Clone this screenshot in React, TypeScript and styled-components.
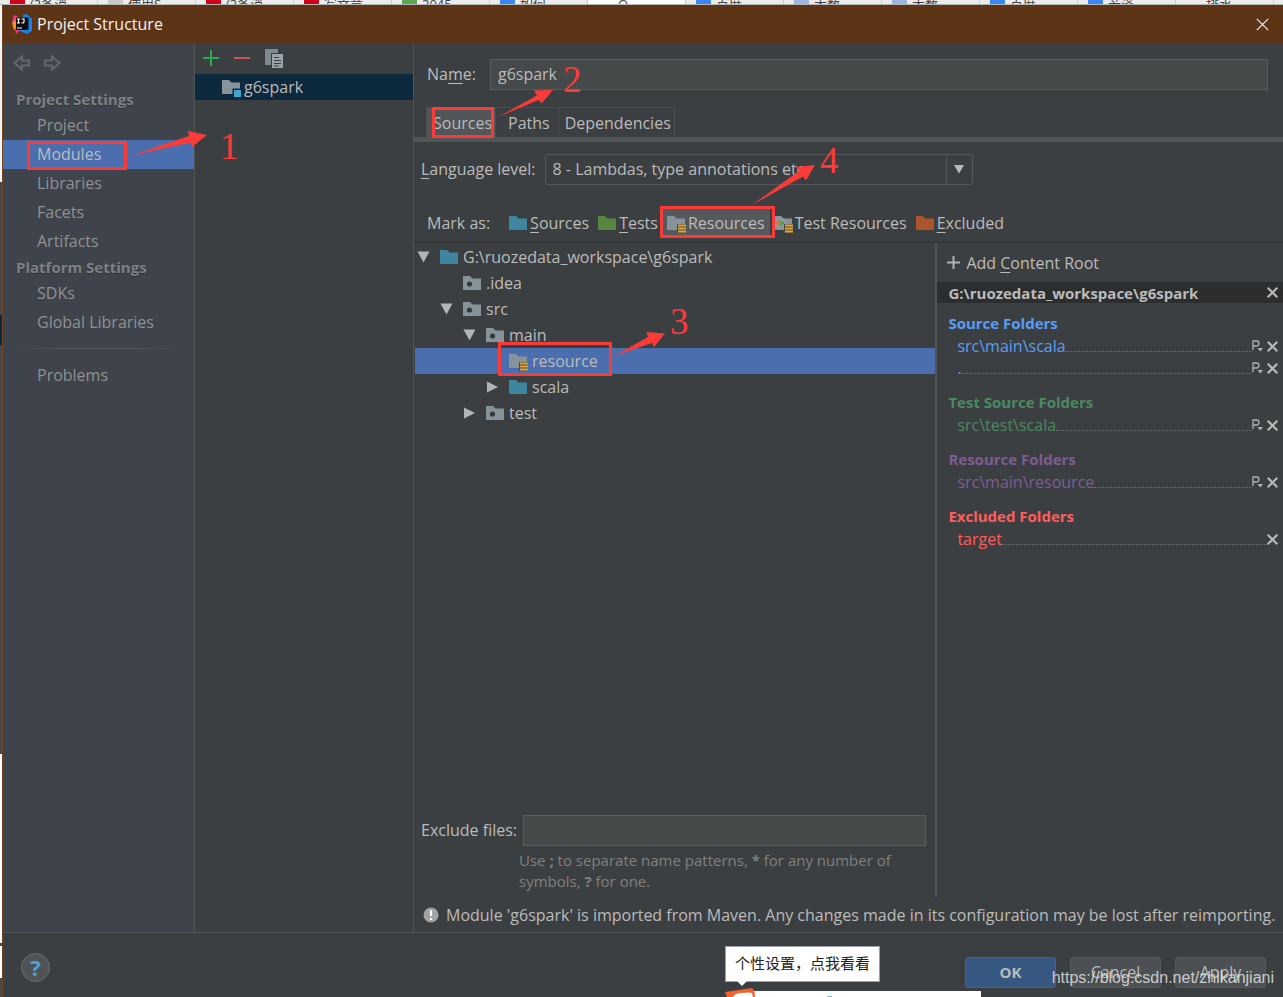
import React from "react";
import styled, { createGlobalStyle, css } from "styled-components";

const color = {
  panel: "#3c3f41",
  sidebar: "#3e434c",
  title: "#5e3416",
  frame: "#6f4526",
  line: "#515355",
  field: "#45494a",
  text: "#bbbbbb",
  muted: "#919191",
  hint: "#808080",
  selected: "#4b6eaf",
  mark: "#fb3b38",
};

const GlobalStyle = createGlobalStyle`
  *, *::before, *::after { box-sizing: border-box; }
  body {
    margin: 0;
    background: ${color.panel};
    color: ${color.text};
    font-family: "Open Sans", "Noto Sans CJK SC", sans-serif;
    font-size: 16px;
    line-height: 22px;
  }
  button, input, select { font: inherit; color: inherit; }
  button { background: none; border: 0; padding: 0; cursor: pointer; }
  a { color: inherit; text-decoration: none; }
  ul { list-style: none; margin: 0; padding: 0; }
  h2, h3, p { margin: 0; font-size: inherit; }
  u { text-underline-offset: 3px; }
  svg { display: block; flex: none; }
`;

/* ---------- desktop behind the dialog ---------- */

const Desktop = styled.div`
  position: relative;
  display: flex;
  flex-direction: column;
  min-height: 100vh;
  overflow: hidden;
`;

const BrowserTabs = styled.div`
  display: flex;
  height: 5px;
  overflow: hidden;
  background: #ececec;
  border-bottom: 1px solid #b4b4b4;
`;

const BrowserTab = styled.span<{ $active?: boolean }>`
  display: flex;
  flex: none;
  gap: 5px;
  width: 98px;
  height: 16px;
  margin-top: -4px;
  padding-left: 10px;
  border-right: 1px solid #c9c9c9;
  background: ${(p) => (p.$active ? "#ffffff" : "transparent")};
  color: #444;
  font-size: 13px;
  line-height: 16px;
  white-space: nowrap;
`;

const Favicon = styled.i<{ $tint: string }>`
  width: 15px;
  height: 15px;
  background: ${(p) => p.$tint};
`;

const Backdrop = styled.div`
  display: flex;
  flex: 1;
  padding-left: 2px;
  background: linear-gradient(
    #f4f4f4 177px,
    #45494a 177px 310px,
    #0d293e 310px 340px,
    #45494a 340px 749px,
    #ffffff 749px 938px,
    #45494a 938px 941px,
    #ffffff 941px 973px,
    #45494a 973px
  );
`;

/* ---------- dialog frame ---------- */

const Dialog = styled.main`
  display: flex;
  flex: 1;
  flex-direction: column;
  min-width: 0;
  border-left: 1px solid ${color.frame};
  background: ${color.panel};
`;

const TitleBar = styled.header`
  display: flex;
  align-items: center;
  gap: 5px;
  height: 38px;
  padding: 0 14px 0 9px;
  background: ${color.title};
  color: #f2f2f2;
`;

const TitleText = styled.span`
  flex: 1;
`;

const Body = styled.div`
  display: grid;
  flex: 1;
  grid-template-columns: 192px 219px minmax(0, 1fr);
  border-bottom: 1px solid ${color.line};
`;

/* ---------- sidebar ---------- */

const Sidebar = styled.nav`
  border-right: 1px solid ${color.line};
  background: ${color.sidebar};
  color: ${color.muted};
`;

const History = styled.div`
  display: flex;
  gap: 14px;
  padding: 11px 0 16px 10px;
`;

const GroupTitle = styled.h2`
  padding-left: 13px;
  color: #7f8082;
  font-weight: 700;
  font-size: 15px;
  line-height: 23px;
  text-shadow: 0 1px 0 #2f3238;
`;

const NavLink = styled.a<{ $current?: boolean }>`
  display: block;
  height: 29px;
  padding-left: 34px;
  line-height: 29px;
  ${(p) =>
    p.$current &&
    css`
      background: ${color.selected};
      color: ${color.text};
    `}
`;

const NavRule = styled.hr`
  height: 1px;
  margin: 11px 8px 12px;
  border: 0;
  background: linear-gradient(90deg, transparent, #54564f 30% 70%, transparent);
`;

/* ---------- module list ---------- */

const ModuleList = styled.section`
  border-right: 1px solid ${color.line};
`;

const ListTools = styled.div`
  display: flex;
  align-items: center;
  gap: 15px;
  height: 31px;
  padding: 0 0 2px 8px;
`;

const ModuleRow = styled.button`
  display: flex;
  align-items: center;
  gap: 3px;
  width: 100%;
  height: 26px;
  padding-left: 27px;
  background: #0d293e;
`;

/* ---------- editor ---------- */

const Editor = styled.section`
  display: flex;
  flex-direction: column;
  min-width: 0;
`;

const FieldLabel = styled.label`
  padding-bottom: 2px;
`;

const NameRow = styled.div`
  display: flex;
  align-items: center;
  gap: 14px;
  padding: 16px 15px 17px 13px;
`;

const TextField = styled.input`
  flex: 1;
  min-width: 0;
  height: 31px;
  padding: 0 7px 2px;
  border: 1px solid #5a5d5e;
  background: ${color.field};
`;

const Tabs = styled.div`
  display: flex;
  height: 35px;
  padding-left: 12px;
  border-bottom: 5px solid #515658;
`;

const Tab = styled.button<{ $active?: boolean }>`
  padding: 0 3px 0 6px;
  border: 1px solid #4a4d4f;
  border-bottom: 0;
  background: ${(p) => (p.$active ? "#515658" : "transparent")};
  & + & {
    border-left: 0;
  }
  &:nth-child(2) {
    padding: 0 8px 0 12px;
  }
`;

const LevelRow = styled.div`
  display: flex;
  align-items: center;
  gap: 9px;
  padding: 12px 0 0 7px;
`;

const SelectBox = styled.div`
  display: grid;
  grid-template-columns: minmax(0, 1fr) 26px;
  align-items: center;
  justify-items: center;
  width: 428px;
  height: 31px;
  border: 1px solid #55585a;
  border-radius: 3px;
`;

const Select = styled.select`
  grid-area: 1 / 1 / 2 / 3;
  width: 100%;
  height: 100%;
  padding: 0 30px 2px 7px;
  border: 0;
  appearance: none;
  background: linear-gradient(#55585a, #55585a) right 25px top / 1px 100% no-repeat;
  option {
    background: ${color.panel};
  }
`;

const SelectArrow = styled.svg`
  grid-area: 1 / 2;
  pointer-events: none;
`;

const MarkRow = styled.div`
  display: flex;
  align-items: center;
  height: 58px;
  padding: 18px 0 0 13px;
  border-bottom: 1px solid #303233;
`;

const MarkLabel = styled.span`
  margin-right: 15px;
`;

const MarkButton = styled.button<{ $pressed?: boolean }>`
  display: flex;
  align-items: center;
  gap: 2px;
  height: 28px;
  padding: 0 5px 0 4px;
  background: ${(p) => (p.$pressed ? "#55595c" : "transparent")};
  white-space: nowrap;
`;

const Roots = styled.div`
  display: grid;
  flex: 1;
  grid-template-columns: minmax(0, 3fr) minmax(0, 2fr);
`;

const TreePane = styled.div`
  display: flex;
  flex-direction: column;
`;

const Tree = styled.div`
  flex: 1;
  padding-top: 1px;
`;

const TreeRow = styled.div<{ $depth: number; $selected?: boolean }>`
  display: flex;
  align-items: center;
  gap: 4px;
  height: 26px;
  margin-left: 1px;
  padding-left: ${(p) => 2 + p.$depth * 23}px;
  background: ${(p) => (p.$selected ? color.selected : "transparent")};
`;

const Twisty = styled.span`
  width: 19px;
`;

const ExcludeForm = styled.div`
  display: grid;
  grid-template-columns: max-content minmax(0, 1fr);
  align-items: center;
  column-gap: 6px;
  padding: 0 9px 5px 7px;
`;

const Hint = styled.p`
  grid-column: 1 / 3;
  padding: 4px 0 0 98px;
  color: ${color.hint};
  font-size: 15px;
  line-height: 21px;
`;

const ContentPane = styled.aside`
  border-left: 2px solid ${color.line};
`;

const AddRoot = styled.button`
  display: flex;
  align-items: center;
  gap: 6px;
  height: 39px;
  padding-left: 10px;
`;

const RootPath = styled.div`
  display: flex;
  align-items: center;
  justify-content: space-between;
  height: 21px;
  padding: 0 5px 0 11px;
  background: #2b2d2f;
  font-weight: 700;
  font-size: 15px;
`;

const FolderGroup = styled.section<{ $tint: string }>`
  padding: 0 5px 0 11px;
  margin-top: 9px;
  color: ${(p) => p.$tint};
  & + & {
    margin-top: 12px;
  }
`;

const FolderTitle = styled.h3`
  font-weight: 700;
  font-size: 15px;
  line-height: 23px;
`;

const FolderRow = styled.div`
  display: flex;
  height: 22px;
  padding-left: 9px;
`;

const Leader = styled.span`
  flex: 1;
  height: 17px;
  border-bottom: 1px dotted #707375;
`;

const FolderActions = styled.span`
  display: flex;
  align-items: center;
  gap: 4px;
  color: ${color.text};
`;

const Warning = styled.p`
  display: flex;
  align-items: center;
  gap: 7px;
  height: 35px;
  padding-left: 9px;
  white-space: nowrap;
`;

/* ---------- footer ---------- */

const Footer = styled.footer`
  position: relative;
  display: flex;
  align-items: center;
  gap: 14px;
  height: 64px;
  padding: 14px 17px 0 18px;
`;

const HelpButton = styled.button`
  width: 29px;
  height: 29px;
  margin: -10px auto 0 0;
  border: 1px solid #6b6e70;
  border-radius: 50%;
  background: #4f5355;
  color: #4aa3d6;
  font-weight: 700;
  font-size: 22px;
  line-height: 26px;
`;

const ActionButton = styled.button<{ $primary?: boolean }>`
  width: 91px;
  height: 31px;
  border: 1px solid ${(p) => (p.$primary ? "#43658f" : "#55595b")};
  border-radius: 3px;
  background: ${(p) => (p.$primary ? "#365880" : "#4c5052")};
  font-weight: ${(p) => (p.$primary ? 700 : 400)};
  font-size: ${(p) => (p.$primary ? 15 : 16)}px;
`;

const Watermark = styled.span`
  position: absolute;
  right: 9px;
  bottom: 8px;
  color: rgba(235, 235, 235, 0.8);
  font-family: "Liberation Sans", Arial, sans-serif;
  font-size: 16px;
`;

const ImeBubble = styled.div`
  position: absolute;
  left: 722px;
  bottom: 15px;
  width: 155px;
  height: 36px;
  border: 1px solid #9aa0a8;
  background: #ffffff;
  color: #222222;
  font-size: 15px;
  line-height: 32px;
  text-align: center;
  &::after {
    content: "";
    position: absolute;
    left: 11px;
    top: 34px;
    border: 5px solid transparent;
    border-top-color: #ffffff;
    border-bottom-width: 0;
  }
`;

const ImeBar = styled.svg`
  position: absolute;
  left: 722px;
  bottom: 0;
`;

const Annotations = styled.svg`
  position: absolute;
  left: 0;
  top: 0;
  pointer-events: none;
  font-family: "Liberation Serif", serif;
  font-size: 37px;
`;

/* ---------- icons ---------- */

type Badge = "dot" | "stripes" | "module" | "testStripes";

const Folder = ({ fill = "#87939a", badge }: { fill?: string; badge?: Badge }) => {
  const striped = badge === "stripes" || badge === "testStripes";
  return (
    <svg width="19" height="20" viewBox="0 0 19 20" aria-hidden="true">
      <path d="M0 3h7l2.500 2.500H18V17H0z" fill={fill} />
      {badge === "dot" && <circle cx="6.500" cy="11" r="2.600" fill="#34383a" />}
      {badge === "module" && (
        <>
          <path d="M10.500 11.500H19V20h-8.500z" fill="#0d293e" />
          <path d="M12 13h7v7h-7z" fill="#3fa5d1" />
        </>
      )}
      {badge === "testStripes" && (
        <>
          <circle cx="6" cy="9.500" r="5.500" fill="#8d999f" />
          <path d="M5.500 7v6L1.500 10z" fill="#f26522" />
          <path d="M6.500 7v6l4-3z" fill="#3fa52c" />
        </>
      )}
      {striped && (
        <>
          <path d="M10 11h9v9h-9z" fill="#4a4a44" />
          <path d="M11 12.500h8M11 15.500h8M11 18.500h8" stroke="#e0a33c" strokeWidth="2" />
        </>
      )}
    </svg>
  );
};

const Cross = ({ size = 11, weight = 2 }: { size?: number; weight?: number }) => (
  <svg width={size} height={size} viewBox="0 0 11 11" aria-hidden="true">
    <path d="M.7.7l9.600 9.600M10.300.7L.7 10.300" stroke="currentColor" strokeWidth={weight} />
  </svg>
);

const PackagePrefix = () => (
  <svg width="11" height="12" viewBox="0 0 11 12" aria-hidden="true">
    <path d="M1 10V1h3.500a2.300 2.300 0 010 5H1" fill="none" stroke="#afb1b3" strokeWidth="1.300" />
    <path d="M5.500 8H11l-2.750 3.500z" fill="#afb1b3" />
  </svg>
);

const Triangle = ({ open }: { open: boolean }) => (
  <svg width="13" height="12" viewBox="0 0 13 12" aria-hidden="true">
    <path d={open ? "M.5.5h12L6.500 11.500z" : "M1 .5l11 5.500L1 11.500z"} fill="#b4b4b4" />
  </svg>
);

const HistoryArrow = ({ forward }: { forward?: boolean }) => (
  <svg width="17" height="18" viewBox="0 0 17 18" aria-hidden="true">
    <path
      d={
        forward
          ? "M1 6.500h7V2.500L15.500 9 8 15.500v-4H1z"
          : "M16 6.500H9V2.500L1.500 9 9 15.500v-4h7z"
      }
      fill="none"
      stroke="#63666b"
      strokeWidth="2"
    />
  </svg>
);

const Logo = () => (
  <svg width="20" height="20" viewBox="0 0 20 20" aria-hidden="true">
    <path d="M2 1l7 3-5 9-4-5z" fill="#fb3c6c" />
    <path d="M0 9l5-3 2 9-5 1z" fill="#f7902b" />
    <path d="M3 14l7 1-6 5z" fill="#f0347c" />
    <path d="M11 1l4-1 5 5v12l-5 3-7-3z" fill="#1483f2" />
    <path d="M4 3.500h12.500V16H4z" fill="#0c0c0c" />
    <path
      d="M5 5h3M6.500 5v4M5 9h3M9.500 5h2.500v3q0 1-2.500 1M5 14h5"
      fill="none"
      stroke="#fff"
      strokeWidth="1.200"
    />
  </svg>
);

/* ---------- data ---------- */

const browserTabs = [
  { label: "(2条消", tint: "#d0021b" },
  { label: "使用S", tint: "#c9c9c9" },
  { label: "(2条消", tint: "#d0021b" },
  { label: "写文章", tint: "#d0021b" },
  { label: "2045", tint: "#5aa84f" },
  { label: "如何", tint: "#3a86f5" },
  { label: "Q", tint: "#ffffff", active: true },
  { label: "百度", tint: "#3a86f5" },
  { label: "大数", tint: "#9db7e0" },
  { label: "大数", tint: "#9db7e0" },
  { label: "百度", tint: "#3a86f5" },
  { label: "若泽", tint: "#3a86f5" },
  { label: "排水", tint: "#ececec" },
  { label: "下载", tint: "#ececec" },
];

const treeRows: {
  name: string;
  depth: number;
  open?: boolean;
  fill?: string;
  badge?: Badge;
  selected?: boolean;
}[] = [
  { name: "G:\\ruozedata_workspace\\g6spark", depth: 0, open: true, fill: "#3e86a0" },
  { name: ".idea", depth: 1, badge: "dot" },
  { name: "src", depth: 1, open: true, badge: "dot" },
  { name: "main", depth: 2, open: true, badge: "dot" },
  { name: "resource", depth: 3, badge: "stripes", selected: true },
  { name: "scala", depth: 3, open: false, fill: "#3e86a0" },
  { name: "test", depth: 2, open: false, badge: "dot" },
];

const folderGroups = [
  { title: "Source Folders", tint: "#589df6", rows: ["src\\main\\scala", "."], prefix: true },
  { title: "Test Source Folders", tint: "#4a8a62", rows: ["src\\test\\scala"], prefix: true },
  { title: "Resource Folders", tint: "#7f5c92", rows: ["src\\main\\resource"], prefix: true },
  { title: "Excluded Folders", tint: "#ff5d5d", rows: ["target"], prefix: false },
];

export default function App() {
  return (
    <Desktop>
      <GlobalStyle />
      <BrowserTabs aria-hidden="true">
        {browserTabs.map((t, i) => (
          <BrowserTab key={i} $active={t.active}>
            <Favicon $tint={t.tint} />
            {t.label}
          </BrowserTab>
        ))}
      </BrowserTabs>
      <Backdrop>
        <Dialog>
          <TitleBar>
            <Logo />
            <TitleText>Project Structure</TitleText>
            <button aria-label="Close">
              <Cross size={13} weight={1} />
            </button>
          </TitleBar>
          <Body>
            <Sidebar>
              <History>
                <button aria-label="Back">
                  <HistoryArrow />
                </button>
                <button aria-label="Forward">
                  <HistoryArrow forward />
                </button>
              </History>
              <GroupTitle>Project Settings</GroupTitle>
              <NavLink href="#project">Project</NavLink>
              <NavLink href="#modules" $current>
                Modules
              </NavLink>
              <NavLink href="#libraries">Libraries</NavLink>
              <NavLink href="#facets">Facets</NavLink>
              <NavLink href="#artifacts">Artifacts</NavLink>
              <GroupTitle>Platform Settings</GroupTitle>
              <NavLink href="#sdks">SDKs</NavLink>
              <NavLink href="#global">Global Libraries</NavLink>
              <NavRule />
              <NavLink href="#problems">Problems</NavLink>
            </Sidebar>

            <ModuleList>
              <ListTools>
                <button aria-label="Add">
                  <svg width="16" height="16" viewBox="0 0 16 16">
                    <path d="M8 0v16M0 8h16" stroke="#2fa84f" strokeWidth="2" />
                  </svg>
                </button>
                <button aria-label="Remove">
                  <svg width="16" height="16" viewBox="0 0 16 16">
                    <path d="M0 8h16" stroke="#c75450" strokeWidth="2" />
                  </svg>
                </button>
                <button aria-label="Copy">
                  <svg width="19" height="20" viewBox="0 0 19 20">
                    <path d="M0 1h13v4H6v12H0z" fill="#7d8b93" />
                    <path d="M7 6h11v14H7z" fill="#9aa5ab" />
                    <path d="M9 9.500h5M9 12.500h7M9 15.500h7M9 18h5" stroke="#3c3f41" />
                  </svg>
                </button>
              </ListTools>
              <ModuleRow>
                <Folder badge="module" />
                g6spark
              </ModuleRow>
            </ModuleList>

            <Editor>
              <NameRow>
                <FieldLabel htmlFor="name">
                  Na<u>m</u>e:
                </FieldLabel>
                <TextField id="name" defaultValue="g6spark" />
              </NameRow>
              <Tabs role="tablist">
                <Tab role="tab" aria-selected="true" $active>
                  Sources
                </Tab>
                <Tab role="tab">Paths</Tab>
                <Tab role="tab">Dependencies</Tab>
              </Tabs>
              <LevelRow>
                <FieldLabel htmlFor="level">
                  <u>L</u>anguage level:
                </FieldLabel>
                <SelectBox>
                  <Select id="level">
                    <option>8 - Lambdas, type annotations etc.</option>
                  </Select>
                  <SelectArrow width="10" height="9" viewBox="0 0 10 9">
                    <path d="M0 0h10L5 8.500z" fill="#b9b9b9" />
                  </SelectArrow>
                </SelectBox>
              </LevelRow>
              <MarkRow>
                <MarkLabel>Mark as:</MarkLabel>
                <MarkButton>
                  <Folder fill="#3e86a0" />
                  <span>
                    <u>S</u>ources
                  </span>
                </MarkButton>
                <MarkButton>
                  <Folder fill="#56853d" />
                  <span>
                    <u>T</u>ests
                  </span>
                </MarkButton>
                <MarkButton $pressed>
                  <Folder badge="stripes" />
                  Resources
                </MarkButton>
                <MarkButton>
                  <Folder badge="testStripes" />
                  Test Resources
                </MarkButton>
                <MarkButton>
                  <Folder fill="#a9562c" />
                  <span>
                    <u>E</u>xcluded
                  </span>
                </MarkButton>
              </MarkRow>

              <Roots>
                <TreePane>
                  <Tree role="tree">
                    {treeRows.map((r) => (
                      <TreeRow
                        key={r.name}
                        role="treeitem"
                        aria-selected={!!r.selected}
                        $depth={r.depth}
                        $selected={r.selected}
                      >
                        <Twisty>{r.open !== undefined && <Triangle open={r.open} />}</Twisty>
                        <Folder fill={r.fill} badge={r.badge} />
                        {r.name}
                      </TreeRow>
                    ))}
                  </Tree>
                  <ExcludeForm>
                    <FieldLabel htmlFor="exclude">Exclude files:</FieldLabel>
                    <TextField id="exclude" />
                    <Hint>
                      Use <b>;</b> to separate name patterns, <b>*</b> for any number of symbols,{" "}
                      <b>?</b> for one.
                    </Hint>
                  </ExcludeForm>
                </TreePane>
                <ContentPane>
                  <AddRoot>
                    <svg width="13" height="13" viewBox="0 0 13 13">
                      <path d="M6.500 0v13M0 6.500h13" stroke="#afb1b3" strokeWidth="2" />
                    </svg>
                    <span>
                      Add <u>C</u>ontent Root
                    </span>
                  </AddRoot>
                  <RootPath>
                    G:\ruozedata_workspace\g6spark
                    <button aria-label="Remove content root">
                      <Cross />
                    </button>
                  </RootPath>
                  {folderGroups.map((g) => (
                    <FolderGroup key={g.title} $tint={g.tint}>
                      <FolderTitle>{g.title}</FolderTitle>
                      {g.rows.map((r) => (
                        <FolderRow key={r}>
                          <span>{r}</span>
                          <Leader />
                          <FolderActions>
                            {g.prefix && (
                              <button aria-label="Edit properties">
                                <PackagePrefix />
                              </button>
                            )}
                            <button aria-label="Remove folder">
                              <Cross />
                            </button>
                          </FolderActions>
                        </FolderRow>
                      ))}
                    </FolderGroup>
                  ))}
                </ContentPane>
              </Roots>
              <Warning>
                <svg width="16" height="16" viewBox="0 0 16 16" aria-hidden="true">
                  <circle cx="8" cy="8" r="7.500" fill="#a3a3a3" />
                  <path d="M8 3v6M8 11v2" stroke="#fff" strokeWidth="2.200" />
                </svg>
                Module 'g6spark' is imported from Maven. Any changes made in its configuration may be
                lost after reimporting.
              </Warning>
            </Editor>
          </Body>

          <Footer>
            <HelpButton aria-label="Help">?</HelpButton>
            <ActionButton $primary>OK</ActionButton>
            <ActionButton>Cancel</ActionButton>
            <ActionButton>Apply</ActionButton>
            <ImeBar width="256" height="9" viewBox="0 0 256 9" aria-hidden="true">
              <path d="M28 3h228v6H28z" fill="#fff" />
              <path d="M0 4q14-2 27-4 3 3 3 9H2z" fill="#f4622e" />
              <path d="M8 9q2-4 8-4 9-1 11 0l1 4z" fill="#fff" />
              <path d="M102 8h5v1h-5z" fill="#7fb4e0" />
            </ImeBar>
            <ImeBubble>个性设置，点我看看</ImeBubble>
            <Watermark>https://blog.csdn.net/zhikanjiani</Watermark>
          </Footer>
        </Dialog>
      </Backdrop>

      <Annotations width="850" height="400" viewBox="0 0 850 400">
        <g fill="none" stroke={color.mark} strokeWidth="3">
          <path d="M28.500 142.500h97v26h-97z" />
          <path d="M433.500 108.500h59v28h-59z" />
          <path d="M661.500 207.500h112v29h-112z" />
          <path d="M499.500 343.500h111v31h-111z" />
        </g>
        <g fill={color.mark}>
          <path d="M131 155.500L189 136l-1-5 19 4-15 12-1.500-4.500z" />
          <path d="M498 117l39-21.500-3-5 19-.5-11.500 13.500-3-3.500z" />
          <path d="M752 205l47-34-3-4 19-2-9 15.500-3-4z" />
          <path d="M615 355.500l33-18.500-1.500-5 18.500 1.500-11 13.500-2-4z" />
          <text x="220" y="159">1</text>
          <text x="563" y="92">2</text>
          <text x="670" y="334">3</text>
          <text x="820" y="173">4</text>
        </g>
      </Annotations>
    </Desktop>
  );
}
